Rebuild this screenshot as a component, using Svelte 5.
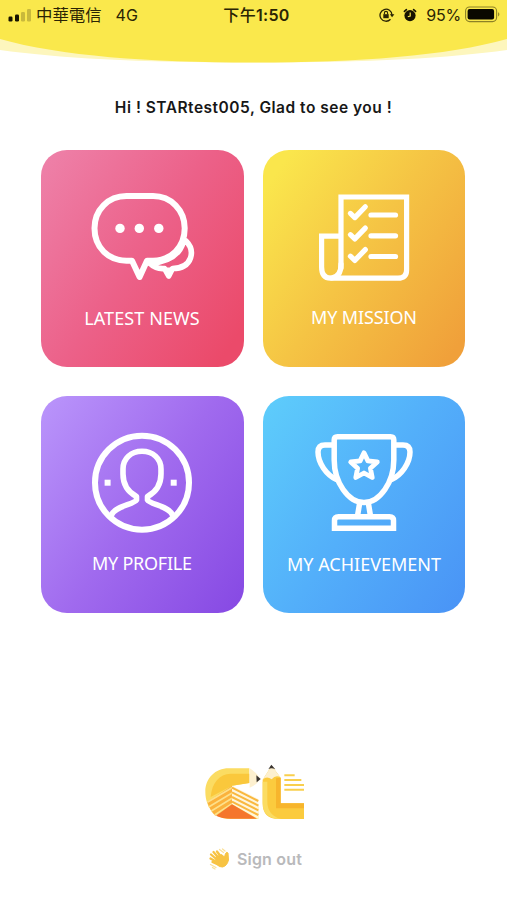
<script>
  const cards = [
    { id: 'news', label: 'LATEST NEWS', width: 115.5, y: 18.6 },
    { id: 'mission', label: 'MY MISSION', width: 106, y: 18.4 },
    { id: 'profile', label: 'MY PROFILE', width: 100, y: 17.8 },
    { id: 'achievement', label: 'MY ACHIEVEMENT', width: 154, y: 19 }
  ];
</script>

<main class="screen">
  <header>
    <svg class="curve" width="507" height="64" viewBox="0 0 507 64">
      <path d="M0 0H507V50C450 58 370 62.5 253 62.5S57 58 0 50Z" fill="#fdf6bd" />
      <path d="M0 0H507V39C447 56 357 62.5 253 62.5S60 56 0 39Z" fill="#fae84c" />
    </svg>
    <div class="status">
      <div class="side left">
        <svg width="24" height="14" viewBox="0 0 24 14">
          <rect x="0.5" y="8.5" width="4" height="5" rx="1.2" fill="#171300" />
          <rect x="7" y="6.5" width="4" height="7" rx="1.2" fill="#171300" />
          <rect x="13" y="4" width="4" height="9.5" rx="1.2" fill="#c9b93c" />
          <rect x="19" y="1" width="4" height="12.5" rx="1.2" fill="#c9b93c" />
        </svg>
        <span class="carrier">中華電信</span>
        <span class="net">4G</span>
      </div>
      <div class="time"><span>下午</span>1:50</div>
      <div class="side right">
        <svg width="16" height="14" viewBox="0 0 16 14" fill="none" stroke="#2a2404">
          <path d="M11.5 11.2A6 6 0 1 1 13 7" stroke-width="1.3" />
          <path d="M10.8 6.3H15.4L13.1 9.3Z" fill="#2a2404" stroke="none" />
          <rect x="4.3" y="6.2" width="5.4" height="4" fill="#2a2404" stroke="none" />
          <path d="M5.4 6.5V5a1.6 1.6 0 0 1 3.2 0v1.5" stroke-width="1.1" />
        </svg>
        <svg class="alarm" width="14" height="14" viewBox="0 0 14 14">
          <circle cx="7" cy="7.6" r="5.6" fill="#171300" />
          <path d="M1.4 3.4L3.4 1.6M12.6 3.4L10.6 1.6" stroke="#171300" stroke-width="1.6" stroke-linecap="round" />
          <path d="M7.2 4.4V8L4.8 8.8" stroke="#fae84c" stroke-width="1.2" fill="none" />
        </svg>
        <span class="percent">95%</span>
        <svg width="36" height="17" viewBox="0 0 36 17">
          <rect x="0.6" y="1" width="31" height="14.6" rx="4" fill="none" stroke="#8d8126" stroke-width="1.1" />
          <rect x="2.6" y="3" width="26.5" height="10.6" rx="2" fill="#0a0800" />
          <path d="M33.3 6q2 2.3 0 4.6Z" fill="#6e6419" />
        </svg>
      </div>
    </div>
  </header>

  <h1>Hi ! STARtest005, Glad to see you !</h1>

  <div class="grid">
    {#each cards as card (card.id)}
      <div class="card {card.id}">
        <svg class="icon" width="112" height="108" viewBox="45 35 112 108">
          {#if card.id === 'news'}
            <path d="M85.5 46H112C130 46 143.7 60 143.7 78.3C143.7 97 130 110.7 112 110.7H106L98.6 127L91 110.7H85.5C67 110.7 53.5 97 53.5 78.3C53.5 60 67 46 85.5 46Z" />
            <path d="M145 91C150 96 151.5 102 149.5 108C147 115 140 118.5 131.5 118.5L127.7 126L123.5 118.5C118 119 112 116.5 108 112.5M142 93C138 105 126 112 109 113.5" stroke-width="5.6" />
            <path d="M125 119H131L127.7 125Z" fill="#fff" stroke-width="3" />
            <g class="solid">
              <circle cx="79" cy="78.4" r="4.7" />
              <circle cx="98.3" cy="78.4" r="4.7" />
              <circle cx="117.8" cy="78.4" r="4.7" />
            </g>
          {:else if card.id === 'mission'}
            <g stroke-width="5.2">
              <path stroke-linejoin="miter" d="M78 118V47H143.6V120Q143.6 128.2 135 128.2H67.5Q58.6 128.2 58.6 117V86.2H78" />
              <path d="M78 114Q78 127 68.5 128" />
              {#each [0, 21.3, 42.8] as dy}
                <path d="M87.4 {63.4 + dy}L91.8 {67.6 + dy}L102.3 {56.8 + dy}" />
              {/each}
              {#each [65, 85.8, 106.5] as y}
                <path d="M108 {y}H132.5" />
              {/each}
            </g>
          {:else if card.id === 'profile'}
            <circle cx="101" cy="86.7" r="47" />
            <path stroke-width="5.6" d="M70.5 119C74 110 93 108.5 95.5 104V100.5C87 96 82 88.5 82 78V73C82 62.5 90 55.3 101 55.3S120 62.5 120 73V78C120 88.5 115 96 106.5 100.5V104C109 108.5 128 110 131.5 119" />
            <g class="solid">
              <rect x="63.6" y="83.7" width="6" height="6" />
              <rect x="129.7" y="83.7" width="6" height="6" />
            </g>
          {:else}
            <g stroke-width="5.5">
              <path d="M74.5 40.7H127.5Q130.8 40.7 130.8 44V64C130.8 86 117 106.5 101 106.5S71.2 86 71.2 64V44Q71.2 40.7 74.5 40.7Z" />
              <path d="M70 49H62Q55 49 55 56C55 67 63.5 79 73.5 83.5M132 49H140Q147 49 147 56C147 67 138.5 79 128.5 83.5" />
              <path d="M96.5 108L94.5 120M105.5 108L107.5 120" />
              <path stroke-linejoin="miter" d="M71.5 132.2V124.5Q71.5 120.7 75.5 120.7H126.5Q130.5 120.7 130.5 124.5V132.2Z" />
              <path stroke-width="4.8" d="M101 56.8L104.9 64.9L114.3 66L107.4 72.3L109.2 81.5L101 77L92.8 81.5L94.6 72.3L87.7 66L97.1 64.9Z" />
            </g>
          {/if}
        </svg>
        <svg class="label" width="202" height="26" viewBox="0 0 202 26">
          <text x="101" y={card.y} text-anchor="middle" textLength={card.width}>{card.label}</text>
        </svg>
      </div>
    {/each}
  </div>

  <footer>
    <svg class="logo" width="106" height="60" viewBox="15 21 318 180">
      <path d="M160 40H98C58 40 28 70 28 110C28 158 58 192 104 192H187V148L108 92L160 84Z" fill="#fbdc62" />
      <path d="M160 56H104C70 58 48 82 44 126L108 92L160 84Z" fill="#fac83c" />
      <path d="M34 140L108 92V148L58 182Q42 168 34 140Z" fill="#fbb23c" />
      <path d="M34 142L108 98M38 156L108 114M46 168L108 130M56 180L108 146" stroke="#fde08a" stroke-width="5" />
      <path d="M108 92L187 132V192L108 148Z" fill="#fff6dc" />
      <path d="M108 98L187 138M108 112L187 152M108 126L187 166M108 140L187 180" stroke="#f9b83f" stroke-width="6" />
      <path d="M60 182L108 148L182 191H104Q78 191 60 182Z" fill="#f5762c" />
      <path d="M161 40Q182 52 193 72Q182 90 161 98Z" fill="#fdf0cf" />
      <path d="M181 61L194 72L182 82Z" fill="#39332f" />
      <path d="M200 74L227 32L254 68V145H324V192H247Q200 192 200 145Z" fill="#fbcb3e" />
      <path d="M200 74L227 32L254 68Q240 58 227 73Q212 62 200 74Z" fill="#fdf0cf" />
      <path d="M217 43L226 29L238 43Q226 37 217 43Z" fill="#39332f" />
      <path d="M240 70L254 68V145H324V160H240Z" fill="#f7b52c" />
      <path d="M200 80H214V140Q214 180 255 192Q200 192 200 145Z" fill="#fbdc62" />
      <path d="M265 61H296M265 75H316M265 90H324M265 104H324" stroke="#f9cf4d" stroke-width="6" />
    </svg>
    <div class="signout">
      <svg width="24" height="24" viewBox="0 0 24 24" fill="none" stroke="#f7c343" stroke-linecap="round">
        <path d="M8 10L13.5 7.5L16.5 10L17.500 6.5Q18.6 4.5 20 6L20.5 13Q19 19 14.5 20Q11 20.5 8.5 17Z" fill="#f7c343" stroke-width="1" />
        <path d="M11.5 12L5.5 5M10 13.5L3 7.5M9.5 15.5L2.5 11.5M10 17.5L4.5 15M13.5 10.5L9 4.5" stroke-width="2.3" />
        <path d="M11.5 2.5L15.5 5.5M14.5 2L17 4M2.5 17.5L8 20.5M4.5 20.5L7 22" stroke="#fae19a" stroke-width="1.3" />
      </svg>
      <span>Sign out</span>
    </div>
  </footer>
</main>

<style>
  :global(body) {
    margin: 0;
    background: #fff;
  }
  .screen {
    width: 507px;
    height: 900px;
    overflow: hidden;
    background: #fff;
    font-family: Inter, 'Noto Sans CJK TC', sans-serif;
    display: flex;
    flex-direction: column;
  }
  header {
    position: relative;
    height: 64px;
    flex: none;
  }
  .curve {
    position: absolute;
    left: 0;
    top: 0;
  }
  .status {
    position: relative;
    height: 29px;
    padding: 0 6px 0 8px;
    display: flex;
    align-items: center;
    color: #2a2404;
    font-size: 16px;
    line-height: 20px;
    white-space: nowrap;
  }
  .side {
    flex: 1 1 0;
    display: flex;
    align-items: center;
  }
  .right {
    justify-content: flex-end;
  }
  .carrier {
    margin-left: 4px;
    font-size: 16.4px;
  }
  .net {
    margin-left: 14px;
  }
  .time {
    font-weight: 600;
    letter-spacing: 0.3px;
    margin-left: 4px;
  }
  .time span {
    font-weight: 500;
  }
  .alarm {
    margin: 0 9px 0 8px;
  }
  .percent {
    margin-right: 4px;
    letter-spacing: -0.2px;
  }
  h1 {
    margin: 31px 0 0;
    height: 24px;
    flex: none;
    font-size: 15.5px;
    line-height: 25px;
    font-weight: 600;
    letter-spacing: 0.5px;
    text-align: center;
    white-space: nowrap;
    color: #171717;
  }
  .grid {
    display: grid;
    flex: none;
    grid-template-columns: 202.5px 202.5px;
    grid-auto-rows: 217px;
    gap: 28.5px 19px;
    margin: 31.3px 0 0 41px;
  }
  .card {
    border-radius: 26px;
    display: flex;
    flex-direction: column;
    align-items: center;
    padding-top: 35px;
    box-sizing: border-box;
  }
  .news {
    background: linear-gradient(125deg, #ee82aa 0%, #ec6189 48%, #eb4a6a 92%);
  }
  .mission {
    background: linear-gradient(125deg, #fae64c 8%, #f5c444 48%, #f0a03a 94%);
  }
  .profile {
    background: linear-gradient(125deg, #b892fa 4%, #a06aee 50%, #884be4 96%);
  }
  .achievement {
    background: linear-gradient(125deg, #5dcbfb 4%, #53affa 50%, #4a95f6 96%);
  }
  .icon {
    flex: none;
    fill: none;
    stroke: #fff;
    stroke-width: 6;
    stroke-linecap: round;
    stroke-linejoin: round;
  }
  .solid {
    fill: #fff;
    stroke: none;
  }
  .label {
    flex: none;
    margin-top: 13px;
    font-family: 'Noto Sans', 'Open Sans', sans-serif;
    font-size: 18px;
    fill: #fff;
  }
  footer {
    display: flex;
    flex-direction: column;
    align-items: center;
    margin-top: 149px;
  }
  .signout {
    display: flex;
    align-items: center;
    gap: 5px;
    margin-top: 24px;
    height: 26px;
    margin-left: 3px;
    color: #b9b9bb;
    font-size: 16px;
    font-weight: 600;
    letter-spacing: 0.2px;
  }
</style>
